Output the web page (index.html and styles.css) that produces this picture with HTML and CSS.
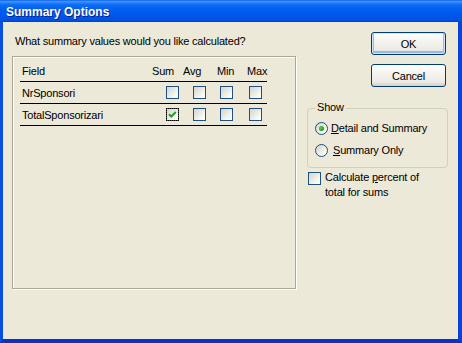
FILE: index.html
```html
<!DOCTYPE html>
<html lang="en">
<head>
    <meta charset="UTF-8">
    <title>Summary Options</title>
    <link rel="stylesheet" href="styles.css">
</head>
<body>
    <div class="window">
        <div class="titlebar">
            <span class="title">Summary Options</span>
        </div>
        <div class="client">
            <div class="main">
                <p class="prompt">What summary values would you like calculated?</p>
                <div class="panel">
                    <div class="grid">
                        <div class="row head">
                            <span class="field">Field</span>
                            <span class="col c-sum">Sum</span>
                            <span class="col c-avg">Avg</span>
                            <span class="col c-min">Min</span>
                            <span class="col c-max">Max</span>
                        </div>
                        <div class="row">
                            <span class="field">NrSponsori</span>
                            <span class="col c-sum"><span class="check"></span></span>
                            <span class="col c-avg"><span class="check"></span></span>
                            <span class="col c-min"><span class="check"></span></span>
                            <span class="col c-max"><span class="check"></span></span>
                        </div>
                        <div class="row">
                            <span class="field">TotalSponsorizari</span>
                            <span class="col c-sum">
                                <span class="check checked focus">
                                    <svg width="11" height="11" viewBox="0 0 11 11"><path d="M2 5.2 L4.3 7.5 L8.8 3" fill="none" stroke="#21a121" stroke-width="2"/></svg>
                                </span>
                            </span>
                            <span class="col c-avg"><span class="check"></span></span>
                            <span class="col c-min"><span class="check"></span></span>
                            <span class="col c-max"><span class="check"></span></span>
                        </div>
                    </div>
                </div>
            </div>

            <div class="side">
                <button class="btn default">OK</button>
                <button class="btn">Cancel</button>

                <div class="group">
                    <span class="group-title">Show</span>
                    <div class="option">
                        <span class="radio selected"></span>
                        <span><u>D</u>etail and Summary</span>
                    </div>
                    <div class="option">
                        <span class="radio"></span>
                        <span class="indent"><u>S</u>ummary Only</span>
                    </div>
                </div>

                <div class="check-label">
                    <span class="check"></span>
                    <span>Calculate <u>p</u>ercent of<br>total for sums</span>
                </div>
            </div>
        </div>
    </div>
</body>
</html>
```

FILE: styles.css
```css
* {
    margin: 0;
    padding: 0;
    box-sizing: border-box;
}

body {
    font-family: 'Liberation Sans', Arial, sans-serif;
    font-size: 11px;
    letter-spacing: -0.2px;
    color: #000;
    background: #fff;
}

.window {
    width: 462px;
    height: 343px;
    display: flex;
    flex-direction: column;
}

/* XP style caption */
.titlebar {
    height: 22px;
    flex: none;
    display: flex;
    align-items: center;
    padding-left: 6px;
    background: linear-gradient(to bottom,
        #0a5ce8 0%, #3d95ff 6%, #2b87fb 12%, #0f6ff4 20%,
        #0562ef 35%, #0058ee 60%, #0055e9 80%, #0050df 92%, #003fc7 100%);
}

.title {
    color: #fff;
    font-weight: bold;
    font-size: 12px;
    letter-spacing: 0;
    text-shadow: 1px 1px 0 #0a1e8c;
    margin-top: 1px;
}

.client {
    flex: 1;
    display: flex;
    background: #ece9d8;
    border-left: 3px solid #0a4fe0;
    border-right: 4px solid #0842d6;
    border-bottom: 4px solid #0733c8;
}

.main {
    margin-left: 9px;
    padding-top: 12px;
    width: 284px;
}

.prompt {
    line-height: 14px;
    padding-left: 3px;
    margin-bottom: 8px;
}

.panel {
    height: 233px;
    border: 1px solid #aca899;
    box-shadow: 1px 1px 0 #fff, inset 1px 1px 0 #fff;
    padding: 3px 0 0 7px;
}

.grid {
    width: 247px;
}

.row {
    display: grid;
    grid-template-columns: 130px 31px 32px 29px 25px;
    align-items: center;
    height: 22px;
    border-bottom: 1px solid #000;
}

.field {
    padding-left: 2px;
}

.col {
    display: flex;
    align-items: center;
}

.head .c-sum { padding-left: 2px; }
.head .c-avg { padding-left: 2px; }
.head .c-min { padding-left: 4px; }
.head .c-max { padding-left: 5px; }

.c-sum .check { margin-left: 16px; }
.c-avg .check { margin-left: 12px; }
.c-min .check { margin-left: 7px; }
.c-max .check { margin-left: 7px; }

.check {
    width: 13px;
    height: 13px;
    flex: none;
    display: flex;
    align-items: center;
    justify-content: center;
    border: 1px solid #1c5180;
    background: linear-gradient(135deg, #d4d4cc 0%, #e9e9e3 45%, #f8f8f5 75%, #fff 100%);
}

.check.focus {
    outline: 1px dotted #000;
    outline-offset: -1px;
}

.side {
    margin-left: 11px;
    width: 141px;
    padding-top: 10px;
    display: flex;
    flex-direction: column;
}

.btn {
    align-self: flex-end;
    margin-right: 2px;
    width: 75px;
    height: 23px;
    font-family: inherit;
    font-size: 11px;
    letter-spacing: -0.2px;
    color: #000;
    border: 1px solid #003c74;
    border-radius: 3px;
    background: linear-gradient(to bottom, #fff 0%, #f4f3ee 40%, #ecebe6 80%, #d6d0c5 100%);
}

.btn.default {
    box-shadow: inset 0 0 0 1px #cee7ff, inset 0 -1px 0 2px #98b8ea;
}

.btn + .btn {
    margin-top: 9px;
}

.group {
    position: relative;
    margin-top: 21px;
    height: 60px;
    border: 1px solid #d0d0bf;
    border-radius: 4px;
    padding: 8px 0 0 7px;
}

.group-title {
    position: absolute;
    top: -9px;
    left: 7px;
    padding: 0 2px;
    line-height: 14px;
    background: #ece9d8;
}

.option {
    display: flex;
    align-items: center;
    height: 22px;
    gap: 3px;
}

.indent {
    padding-left: 2px;
}

.radio {
    width: 13px;
    height: 13px;
    border-radius: 50%;
    border: 1px solid #1c5180;
    background: linear-gradient(135deg, #d4d4cc 0%, #e9e9e3 45%, #f8f8f5 75%, #fff 100%);
    display: flex;
    align-items: center;
    justify-content: center;
}

.radio.selected::after {
    content: "";
    width: 5px;
    height: 5px;
    border-radius: 50%;
    background: radial-gradient(circle at 40% 40%, #55d355 0%, #21a121 60%, #1a8a1a 100%);
}

.check-label {
    display: flex;
    align-items: flex-start;
    gap: 4px;
    margin-top: 4px;
    padding-left: 1px;
    line-height: 15px;
}

.check-label span + span {
    margin-top: -2px;
}
```
